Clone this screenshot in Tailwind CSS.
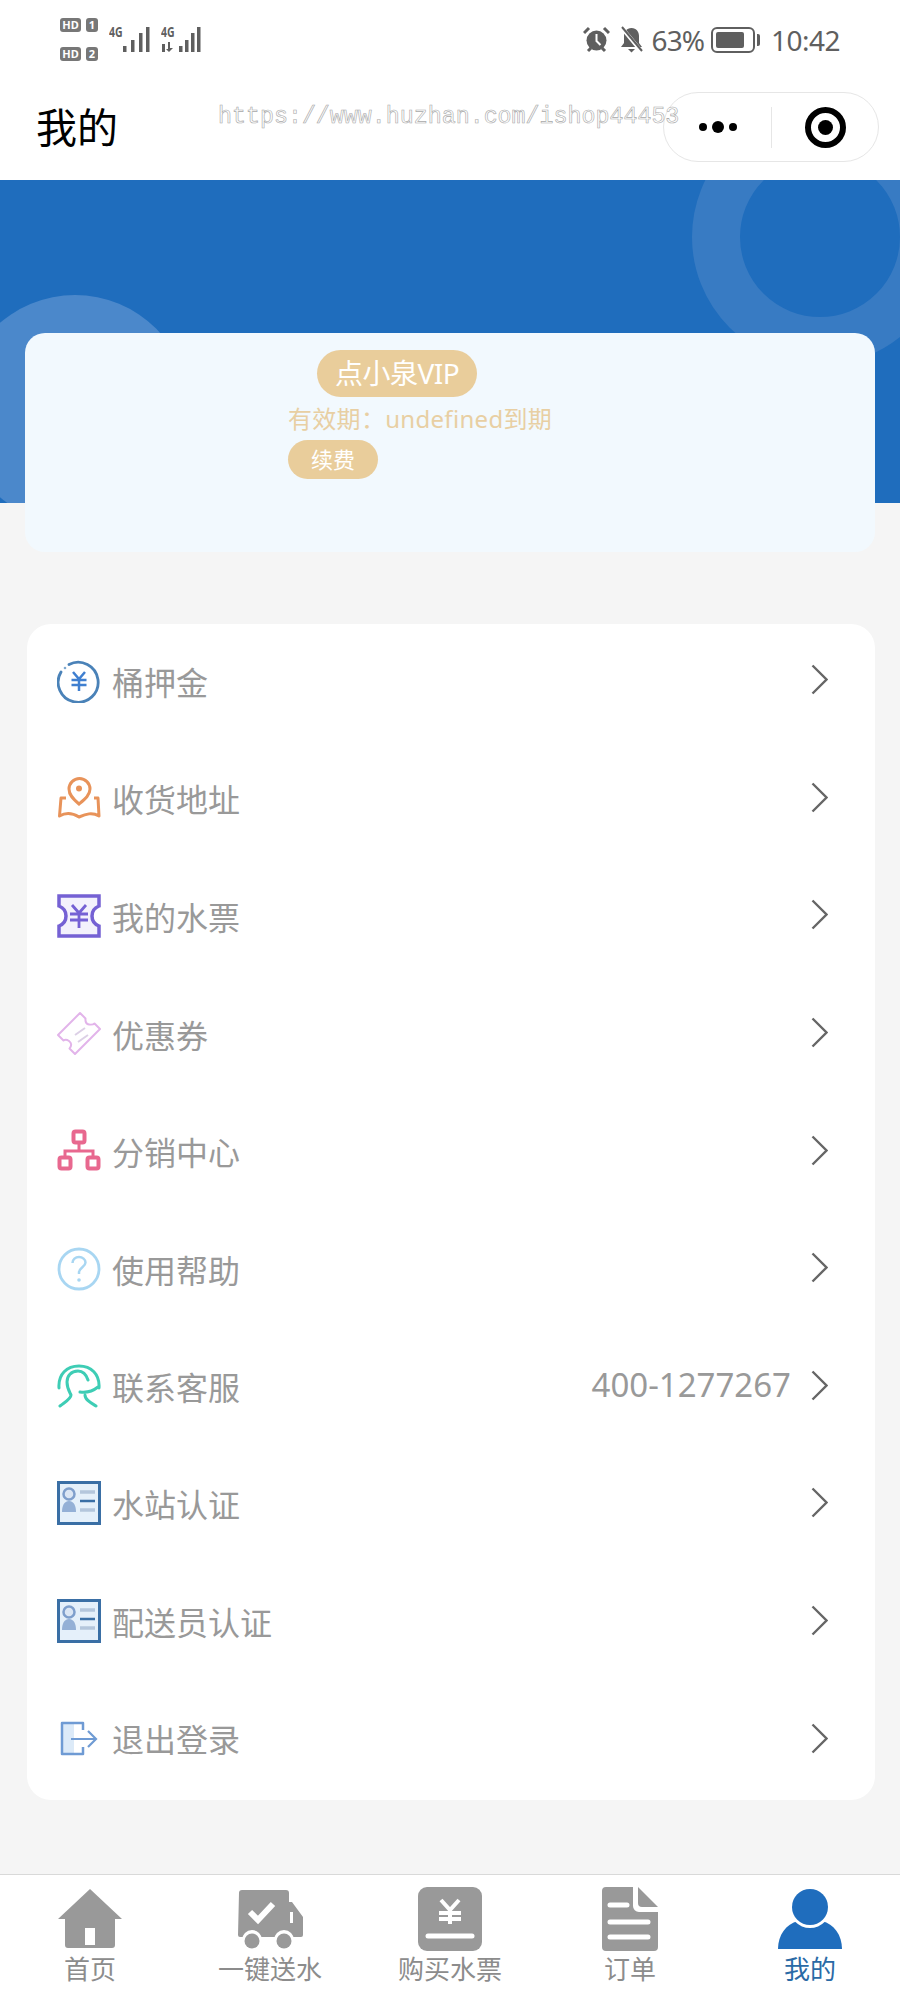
<!DOCTYPE html>
<html lang="zh-CN">
<head>
    <meta charset="UTF-8">
    <meta name="viewport" content="width=device-width, initial-scale=1.0">
    <title>我的</title>
    <script src="https://cdn.jsdelivr.net/npm/@tailwindcss/browser@4"></script>
</head>
<body class="bg-[#f5f5f5] font-['Noto_Sans','Noto_Sans_CJK_SC',sans-serif]">
<div class="w-[900px] h-[2000px] flex flex-col overflow-hidden">

    <!-- Status bar -->
    <div class="h-[79px] bg-white flex items-center justify-between pl-[60px] pr-[60px] text-[#5f5f5f]">
        <div class="flex items-center">
            <div class="flex flex-col gap-[15px] w-[38px]">
                <div class="flex justify-between">
                    <span class="w-[21px] h-[14px] rounded-[3px] bg-[#777] text-white text-[11px] leading-[14px] font-bold text-center">HD</span>
                    <span class="w-[12px] h-[14px] rounded-[3px] bg-[#777] text-white text-[11px] leading-[14px] font-bold text-center">1</span>
                </div>
                <div class="flex justify-between">
                    <span class="w-[21px] h-[14px] rounded-[3px] bg-[#777] text-white text-[11px] leading-[14px] font-bold text-center">HD</span>
                    <span class="w-[12px] h-[14px] rounded-[3px] bg-[#777] text-white text-[11px] leading-[14px] font-bold text-center">2</span>
                </div>
            </div>
            <div class="relative w-[42px] h-[26px] ml-[11px]">
                <span class="absolute left-0 top-[-2px] text-[14px] leading-[14px] font-bold scale-x-75 origin-left">4G</span>
                <svg class="absolute left-[14px] top-0" width="28" height="26" viewBox="0 0 28 26" fill="#5f5f5f"><rect x="0" y="19" width="3.5" height="6"/><rect x="8" y="13" width="3.5" height="12"/><rect x="16" y="6" width="3.5" height="19"/><rect x="23" y="0" width="3.5" height="25"/></svg>
            </div>
            <div class="relative w-[42px] h-[26px] ml-[10px]">
                <span class="absolute left-0 top-[-2px] text-[14px] leading-[14px] font-bold scale-x-75 origin-left">4G</span>
                <svg class="absolute left-0 top-0" width="42" height="26" viewBox="0 0 42 26" fill="#5f5f5f"><path d="M1 17h3v8H1zM7 15h2v6h3l-4 4-3-3h2z"/><rect x="18" y="19" width="3.5" height="6"/><rect x="24" y="13" width="3.5" height="12"/><rect x="30" y="6" width="3.5" height="19"/><rect x="36" y="0" width="3.5" height="25"/></svg>
            </div>
        </div>
        <div class="flex items-center">
            <svg width="27" height="27" viewBox="0 0 27 27" fill="none"><circle cx="13.5" cy="14.5" r="10" fill="#5f5f5f"/><path d="M13.5 8v7l4 4" stroke="#fff" stroke-width="2"/><path d="M1 7l5-5M26 7l-5-5M5 25l3-3M22 25l-3-3" stroke="#5f5f5f" stroke-width="3"/></svg>
            <svg class="ml-[9px]" width="25" height="27" viewBox="0 0 25 27" fill="none"><path d="M12.5 2c-5 0-7.5 4-7.5 8v7l-3 4h21l-3-4v-7c0-4-2.5-8-7.5-8z" fill="#5f5f5f"/><path d="M9 23h7l-3.500 3.500z" fill="#5f5f5f"/><path d="M3 2l19 23" stroke="#fff" stroke-width="4"/><path d="M3 1l20 24" stroke="#5f5f5f" stroke-width="2"/></svg>
            <span class="ml-[8px] text-[28px] leading-[32px] tracking-[-1px]">63%</span>
            <div class="ml-[7px] flex items-center">
                <div class="w-[44px] h-[26px] rounded-[6px] border-[2px] border-[#5f5f5f] p-[3px]">
                    <div class="w-[28px] h-full bg-[#5f5f5f] rounded-[2px]"></div>
                </div>
                <div class="ml-[2px] w-[3px] h-[12px] bg-[#5f5f5f] rounded-r-[2px]"></div>
            </div>
            <span class="ml-[11px] text-[28px] leading-[32px] tracking-[-0.5px]">10:42</span>
        </div>
    </div>

    <!-- Title bar -->
    <div class="relative h-[101px] bg-white flex items-center justify-between pl-[36px] pr-[21px] pb-[5px]">
        <h1 class="text-[41px] leading-[50px] text-black">我的</h1>
        <div class="w-[216px] h-[70px] rounded-full border border-[#e6e6e6] bg-white flex items-center">
            <div class="w-[107px] flex items-center justify-center gap-[5px]">
                <span class="w-[8px] h-[8px] rounded-full bg-black"></span>
                <span class="w-[12px] h-[12px] rounded-full bg-black"></span>
                <span class="w-[8px] h-[8px] rounded-full bg-black"></span>
            </div>
            <div class="w-px h-[41px] bg-[#e6e6e6]"></div>
            <div class="flex-1 flex items-center justify-center">
                <div class="w-[41px] h-[41px] rounded-full border-[6px] border-black flex items-center justify-center">
                    <div class="w-[15px] h-[15px] rounded-full bg-black"></div>
                </div>
            </div>
        </div>
        <span class="absolute left-[218px] top-[26px] font-['Liberation_Mono',monospace] text-[23.3px] leading-[24px] text-white [-webkit-text-stroke:0.6px_#a8a8a8] whitespace-nowrap">https://www.huzhan.com/ishop44453</span>
    </div>

    <!-- Blue banner -->
    <div class="relative h-[323px] bg-[#1f6dbd] overflow-hidden shrink-0">
        <div class="absolute left-[692px] top-[-71px] w-[256px] h-[256px] rounded-full border-[48px] border-[#387bc3]"></div>
        <div class="absolute left-[-40px] top-[115px] w-[230px] h-[230px] rounded-full bg-[#4b88cb]"></div>
    </div>

    <!-- VIP card -->
    <div class="relative mt-[-170px] mx-[25px] h-[219px] bg-[#f2f9fe] rounded-[20px] pl-[263px] pt-[17px] shrink-0">
        <div class="ml-[29px] w-[160px] h-[47px] rounded-full bg-[#e9cd9b] text-white text-[28px] leading-[46px] tracking-[-0.5px] text-center">点小泉VIP</div>
        <div class="mt-[6px] text-[24px] leading-[32px] tracking-[0.3px] text-[#e8cfa3] whitespace-nowrap">有效期：undefined到期</div>
        <div class="mt-[5px] w-[90px] h-[39px] rounded-full bg-[#e9cd9b] text-white text-[22px] leading-[38px] text-center">续费</div>
    </div>

    <!-- Menu list -->
    <div class="mt-[72px] ml-[27px] mr-[25px] h-[1176px] bg-white rounded-[24px] pl-[30px] pr-[47px] flex flex-col text-[#999] text-[32px] shrink-0">
        <div class="flex-1 flex items-center">
            <svg class="shrink-0 -mt-[4px]" width="44" height="44" viewBox="0 0 44 44" fill="none"><path d="M12 5.5A20 20 0 1 1 4 13" stroke="#4a82b8" stroke-width="2.8" stroke-linecap="round"/><circle cx="8" cy="9" r="1.3" fill="#7fa9d0"/><path d="M16 13l6 7 6-7M14.5 21h15M14.5 26h15M22 20v12" stroke="#3f7fd0" stroke-width="2.5"/></svg>
            <span class="ml-[11px] flex-1 leading-[40px]">桶押金</span>
            <svg class="-mt-[6px]" width="17" height="31" viewBox="0 0 17 31" fill="none"><path d="M1.5 1.5L15.5 15.5L1.5 29.5" stroke="#666" stroke-width="2.4"/></svg>
        </div>
        <div class="flex-1 flex items-center">
            <svg class="shrink-0 -mt-[4px]" width="44" height="44" viewBox="0 0 44 44" fill="none"><path d="M22 28c-6-5-10-9-10-15a10.500 10.500 0 0 1 21 0c0 6-5 10-11 15z" stroke="#e8935a" stroke-width="3"/><circle cx="22" cy="12.5" r="3" fill="#e8935a"/><path d="M9 22H4L2.500 40c7-4 13-3 19.500 1 7-3 13-5 20-1l-1-18h-4" stroke="#e8935a" stroke-width="3" stroke-linejoin="round"/></svg>
            <span class="ml-[11px] flex-1 leading-[40px]">收货地址</span>
            <svg class="-mt-[6px]" width="17" height="31" viewBox="0 0 17 31" fill="none"><path d="M1.5 1.5L15.5 15.5L1.5 29.5" stroke="#666" stroke-width="2.4"/></svg>
        </div>
        <div class="flex-1 flex items-center">
            <svg class="shrink-0 -mt-[4px]" width="44" height="44" viewBox="0 0 44 44" fill="none"><path d="M2 2h40v10c-5 2-7 6-7 10s2 8 7 10v10H2V32c5-2 7-6 7-10s-2-8-7-10z" fill="#f3f1fc" stroke="#7561d4" stroke-width="3.500"/><path d="M15 11l7 8 7-8M13 20h18M13 26h18M22 19v15" stroke="#7561d4" stroke-width="2.8"/></svg>
            <span class="ml-[11px] flex-1 leading-[40px]">我的水票</span>
            <svg class="-mt-[6px]" width="17" height="31" viewBox="0 0 17 31" fill="none"><path d="M1.5 1.5L15.5 15.5L1.5 29.5" stroke="#666" stroke-width="2.4"/></svg>
        </div>
        <div class="flex-1 flex items-center">
            <svg class="shrink-0 -mt-[6px]" width="44" height="44" viewBox="0 0 44 44" fill="none"><path d="M23 2L28.5 7.5Q28 13 32 13.5Q36 14 37.5 12.5L43 18L18 43L12.5 37.5Q16 33 12 30Q9 28 6.5 29.5L1 24Z" stroke="#e2b4ea" stroke-width="2" stroke-linejoin="round"/><path d="M18 24l10-7M21 31l10-7" stroke="#dcd0e6" stroke-width="2"/></svg>
            <span class="ml-[11px] flex-1 leading-[40px]">优惠券</span>
            <svg class="-mt-[6px]" width="17" height="31" viewBox="0 0 17 31" fill="none"><path d="M1.5 1.5L15.5 15.5L1.5 29.5" stroke="#666" stroke-width="2.4"/></svg>
        </div>
        <div class="flex-1 flex items-center">
            <svg class="shrink-0 -mt-[4px]" width="44" height="44" viewBox="0 0 44 44" fill="none"><rect x="16.5" y="2.5" width="11" height="11" rx="2" stroke="#e8688f" stroke-width="4"/><rect x="2.5" y="28.5" width="11" height="11" rx="2" stroke="#e8688f" stroke-width="4"/><rect x="30.5" y="28.5" width="11" height="11" rx="2" stroke="#e8688f" stroke-width="4"/><path d="M22 14v8M8 28v-6h28v6" stroke="#e8688f" stroke-width="3"/></svg>
            <span class="ml-[11px] flex-1 leading-[40px]">分销中心</span>
            <svg class="-mt-[6px]" width="17" height="31" viewBox="0 0 17 31" fill="none"><path d="M1.5 1.5L15.5 15.5L1.5 29.5" stroke="#666" stroke-width="2.4"/></svg>
        </div>
        <div class="flex-1 flex items-center">
            <svg class="shrink-0 -mt-[4px]" width="44" height="44" viewBox="0 0 44 44" fill="none"><circle cx="22" cy="22" r="20" stroke="#a8d6f2" stroke-width="2.8"/><path d="M15.5 16c0-3.500 3-6 6.500-6s6.500 2.500 6.500 5.500c0 4.500-6.500 5-6.500 10v1.500" stroke="#a8d6f2" stroke-width="2.5"/><circle cx="22" cy="33" r="1.8" fill="#a8d6f2"/></svg>
            <span class="ml-[11px] flex-1 leading-[40px]">使用帮助</span>
            <svg class="-mt-[6px]" width="17" height="31" viewBox="0 0 17 31" fill="none"><path d="M1.5 1.5L15.5 15.5L1.5 29.5" stroke="#666" stroke-width="2.4"/></svg>
        </div>
        <div class="flex-1 flex items-center">
            <svg class="shrink-0 -mt-[4px]" width="44" height="44" viewBox="0 0 44 44" fill="none"><path d="M2 24C1 10 10 2 22 2S43 10 42 24" stroke="#3ecdb5" stroke-width="3" stroke-linecap="round"/><path d="M31 16C29 10 26 7 21 7C14 7 10 12 10 18C10 24 12 27 14 31C14 35 8 38 3 42" stroke="#3ecdb5" stroke-width="3" stroke-linecap="round"/><path d="M23 28C30 29 36 27 41 23M28 31C28 36 34 39 39 42" stroke="#3ecdb5" stroke-width="3" stroke-linecap="round"/></svg>
            <span class="ml-[11px] flex-1 leading-[40px]">联系客服</span>
            <span class="mr-[20px] -mt-[6px] text-[33px] leading-[40px] text-[#999]">400-1277267</span>
            <svg class="-mt-[6px]" width="17" height="31" viewBox="0 0 17 31" fill="none"><path d="M1.5 1.5L15.5 15.5L1.5 29.5" stroke="#666" stroke-width="2.4"/></svg>
        </div>
        <div class="flex-1 flex items-center">
            <svg class="shrink-0 -mt-[6px]" width="44" height="44" viewBox="0 0 44 44" fill="none"><rect x="1.5" y="1.5" width="41" height="41" fill="#e5f0fa" stroke="#3a6fa5" stroke-width="3"/><circle cx="12" cy="13" r="5.5" fill="#dbe6f4" stroke="#7f9fcc" stroke-width="2.5"/><path d="M5 31c0-6 2-11 7-11s7 5 7 11z" fill="#94b0d6"/><path d="M23 11h15M23 29h15" stroke="#b4c6dc" stroke-width="3.5"/><path d="M23 20h15" stroke="#3a6fa5" stroke-width="2.5"/></svg>
            <span class="ml-[11px] flex-1 leading-[40px] -mt-[2px]">水站认证</span>
            <svg class="-mt-[6px]" width="17" height="31" viewBox="0 0 17 31" fill="none"><path d="M1.5 1.5L15.5 15.5L1.5 29.5" stroke="#666" stroke-width="2.4"/></svg>
        </div>
        <div class="flex-1 flex items-center">
            <svg class="shrink-0 -mt-[6px]" width="44" height="44" viewBox="0 0 44 44" fill="none"><rect x="1.5" y="1.5" width="41" height="41" fill="#e5f0fa" stroke="#3a6fa5" stroke-width="3"/><circle cx="12" cy="13" r="5.5" fill="#dbe6f4" stroke="#7f9fcc" stroke-width="2.5"/><path d="M5 31c0-6 2-11 7-11s7 5 7 11z" fill="#94b0d6"/><path d="M23 11h15M23 29h15" stroke="#b4c6dc" stroke-width="3.5"/><path d="M23 20h15" stroke="#3a6fa5" stroke-width="2.5"/></svg>
            <span class="ml-[11px] flex-1 leading-[40px] -mt-[2px]">配送员认证</span>
            <svg class="-mt-[6px]" width="17" height="31" viewBox="0 0 17 31" fill="none"><path d="M1.5 1.5L15.5 15.5L1.5 29.5" stroke="#666" stroke-width="2.4"/></svg>
        </div>
        <div class="flex-1 flex items-center">
            <svg class="shrink-0 -mt-[4px]" width="44" height="44" viewBox="0 0 44 44" fill="none"><path d="M5 6h12v31H5z" fill="#dceaf8"/><path d="M26 13V6H5v31h21v-7" stroke="#6f9bd4" stroke-width="2.5" stroke-linejoin="round"/><path d="M14 22h25M31 14l8 8-8 8" stroke="#6f9bd4" stroke-width="2.2"/></svg>
            <span class="ml-[11px] flex-1 leading-[40px] -mt-[2px]">退出登录</span>
            <svg class="-mt-[6px]" width="17" height="31" viewBox="0 0 17 31" fill="none"><path d="M1.5 1.5L15.5 15.5L1.5 29.5" stroke="#666" stroke-width="2.4"/></svg>
        </div>
    </div>

    <!-- Tab bar -->
    <div class="mt-auto h-[126px] bg-white border-t border-[#d9d9d9] grid grid-cols-5 text-[#8c8c8c] text-[26px] shrink-0">
        <div class="flex flex-col items-center pt-[12px]">
            <svg width="66" height="64" viewBox="0 0 66 64" fill="none"><path d="M33 2L65 32h-7v26a3 3 0 0 1-3 3H11a3 3 0 0 1-3-3V32H1z" fill="#999"/><rect x="28" y="41" width="10" height="17" fill="#fff"/></svg>
            <span class="leading-[30px] mt-[3px]">首页</span>
        </div>
        <div class="flex flex-col items-center pt-[12px]">
            <svg width="66" height="64" viewBox="0 0 66 64" fill="none"><path d="M2 6a3 3 0 0 1 3-3h44a3 3 0 0 1 3 3v9h3l11 15v18a2 2 0 0 1-2 2H3a2 2 0 0 1-2-2z" fill="#999"/><rect x="53" y="25" width="3" height="11" fill="#fff"/><path d="M13 25l8 8 15-16" stroke="#fff" stroke-width="6"/><circle cx="15" cy="53" r="10" fill="#fff"/><circle cx="47" cy="53" r="10" fill="#fff"/><circle cx="15" cy="54" r="7.5" fill="#999"/><circle cx="47" cy="54" r="7.5" fill="#999"/></svg>
            <span class="leading-[30px] mt-[3px]">一键送水</span>
        </div>
        <div class="flex flex-col items-center pt-[11px]">
            <svg width="66" height="66" viewBox="0 0 66 66" fill="none"><rect x="1" y="1" width="64" height="64" rx="9" fill="#999"/><path d="M24 14l9 10 9-10M22 27h22M22 33h22M33 24v14" stroke="#fff" stroke-width="4"/><path d="M11 50h44" stroke="#fff" stroke-width="5" stroke-linecap="round"/></svg>
            <span class="leading-[30px] mt-[2px]">购买水票</span>
        </div>
        <div class="flex flex-col items-center pt-[11px]">
            <svg width="58" height="66" viewBox="0 0 58 66" fill="none"><path d="M5 1h27v19a6 6 0 0 0 6 6h19v35a4 4 0 0 1-4 4H5a4 4 0 0 1-4-4V5a4 4 0 0 1 4-4z" fill="#999"/><path d="M37 1v16a4 4 0 0 0 4 4h16z" fill="#999"/><path d="M9 19h17M9 36h38M9 51h38" stroke="#fff" stroke-width="5" stroke-linecap="round"/></svg>
            <span class="leading-[30px] mt-[2px]">订单</span>
        </div>
        <div class="flex flex-col items-center pt-[12px]">
            <svg width="66" height="64" viewBox="0 0 66 64" fill="none"><path d="M1 62c0-14 8-25 20-28h24c12 3 20 14 20 28z" fill="#1f6dbd"/><circle cx="33" cy="20" r="21" fill="#fff"/><circle cx="33" cy="20" r="18" fill="#1f6dbd"/></svg>
            <span class="leading-[30px] mt-[3px] text-[#2a6aa6]">我的</span>
        </div>
    </div>
</div>
</body>
</html>
